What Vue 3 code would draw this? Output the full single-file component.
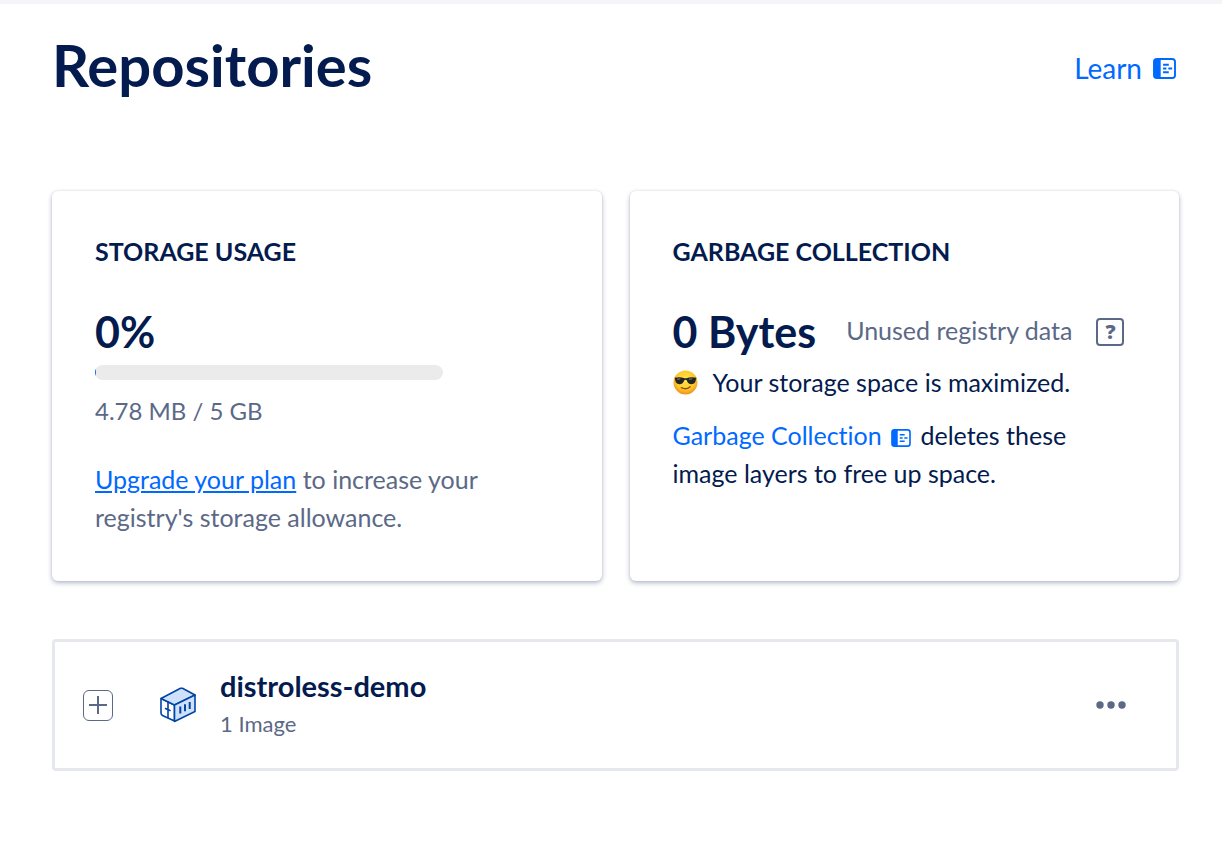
<template>
  <main class="page">
    <header class="page-header">
      <h1 class="page-title">Repositories</h1>
      <a href="#learn" class="doc-link learn-link">
        Learn
        <svg class="doc-icon" viewBox="0 0 24 22" aria-hidden="true">
          <rect x="1" y="1" width="22" height="20" rx="3" fill="none" stroke="currentColor" stroke-width="2" />
          <path d="M3 1h5v20H3a2 2 0 0 1-2-2V3a2 2 0 0 1 2-2z" fill="currentColor" />
          <path d="M10.500 7h6M10.500 11h3.500M16 11h4M10.500 15h6" fill="none" stroke="currentColor" stroke-width="2" />
        </svg>
      </a>
    </header>

    <section class="cards">
      <!-- Storage usage -->
      <article class="card">
        <h2 class="card-title">Storage usage</h2>
        <div class="figure-row">
          <span class="figure">{{ usedPercent }}%</span>
        </div>
        <div
          class="usage-bar"
          role="progressbar"
          aria-label="Storage usage"
          :aria-valuenow="usedPercent"
          aria-valuemin="0"
          aria-valuemax="100"
        >
          <div class="usage-fill" :style="{ width: fillWidth }"></div>
        </div>
        <p class="usage-text">{{ usedMb }} MB / {{ totalGb }} GB</p>
        <p class="upgrade-text">
          <a href="#upgrade" class="upgrade-link">Upgrade your plan</a> to increase your registry's storage allowance.
        </p>
      </article>

      <!-- Garbage collection -->
      <article class="card">
        <h2 class="card-title">Garbage collection</h2>
        <div class="figure-row">
          <span class="figure">0 Bytes</span>
          <span class="figure-label">Unused registry data</span>
          <button type="button" class="help-btn" aria-label="Help">?</button>
        </div>
        <p class="status">
          <svg class="emoji" viewBox="0 0 24 24" aria-hidden="true">
            <defs>
              <radialGradient id="face" cx="50%" cy="40%" r="60%">
                <stop offset="0" stop-color="#ffe74c" />
                <stop offset="0.65" stop-color="#ffc92e" />
                <stop offset="1" stop-color="#ee8f17" />
              </radialGradient>
            </defs>
            <circle cx="12" cy="12" r="11.500" fill="url(#face)" />
            <path d="M1.500 7.500Q7 6.300 11 8h2Q17 6.300 22.500 7.500L22 9.200Q21.500 13.500 18 13.700Q14.300 13.800 13.200 9.800Q12 9 10.800 9.800Q9.700 13.800 6 13.700Q2.500 13.500 2 9.200z" fill="#242424" />
            <path d="M4 9l3-.5M15.500 9l3-.5" stroke="#777" stroke-width="1" />
            <path d="M8 17Q12.500 19.300 16.500 16" fill="none" stroke="#8b4d12" stroke-width="1.300" stroke-linecap="round" />
          </svg>
          <span>Your storage space is maximized.</span>
        </p>
        <p class="gc-text">
          <a href="#garbage-collection" class="doc-link">Garbage Collection
            <svg class="doc-icon small" viewBox="0 0 24 22" aria-hidden="true">
              <rect x="1" y="1" width="22" height="20" rx="3" fill="none" stroke="currentColor" stroke-width="2" />
              <path d="M3 1h5v20H3a2 2 0 0 1-2-2V3a2 2 0 0 1 2-2z" fill="currentColor" />
              <path d="M10.500 7h6M10.500 11h3.500M16 11h4M10.500 15h6" fill="none" stroke="currentColor" stroke-width="2" />
            </svg></a>
          deletes these image layers to free up space.
        </p>
      </article>
    </section>

    <!-- Repository list -->
    <ul class="repo-list">
      <li v-for="repo in repositories" :key="repo.name" class="repo">
        <button type="button" class="expand-btn" aria-label="Expand">
          <svg viewBox="0 0 28 28" aria-hidden="true">
            <path d="M14 5v18M5 14h18" fill="none" stroke="currentColor" stroke-width="2" />
          </svg>
        </button>
        <svg class="repo-icon" viewBox="0 0 36 36" aria-hidden="true">
          <g stroke="#0045a5" stroke-width="1.600" stroke-linejoin="round" stroke-linecap="round">
            <path d="M1 11.500L14.500 18v16L2.500 28.500Q1 27.500 1 26z" fill="#fff" />
            <path d="M1 11.500L20.500 1.300h2L35 8 14.500 18z" fill="#cfe0fa" />
            <path d="M14.500 18L35 8v16.500L14.500 34.500z" fill="#cfe0fa" />
            <path d="M8 14.800v16M5.500 21.500l4.500 2" fill="none" />
            <path d="M20.300 19.500v7M25 17.300v7M29.700 15v7" fill="none" stroke-width="2" stroke-linecap="butt" />
          </g>
        </svg>
        <div class="repo-info">
          <h3 class="repo-name">{{ repo.name }}</h3>
          <p class="repo-images">{{ repo.images }} Image</p>
        </div>
        <button type="button" class="more-btn" aria-label="More">
          <svg viewBox="0 0 30 8" aria-hidden="true">
            <circle cx="4" cy="4" r="3.700" />
            <circle cx="15" cy="4" r="3.700" />
            <circle cx="26" cy="4" r="3.700" />
          </svg>
        </button>
      </li>
    </ul>
  </main>
</template>

<script setup>
import { ref, computed } from 'vue';

const usedMb = ref(4.78);
const totalGb = ref(5);

const repositories = ref([
  { name: 'distroless-demo', images: 1 }
]);

const usedRatio = computed(() => usedMb.value / (totalGb.value * 1024));
const usedPercent = computed(() => Math.round(usedRatio.value * 100));
const fillWidth = computed(() => `${usedRatio.value * 100}%`);
</script>

<style>
body {
  background: #fff;
}
</style>

<style scoped>
.page {
  border-top: 4px solid #f3f5f9;
  padding: 29px 43px 40px 52px;
  font-family: Lato, "Liberation Sans", sans-serif;
  font-size: 25px;
  font-variant-ligatures: none;
  line-height: 38px;
  color: #031b4e;
}

h1,
h2,
h3,
p,
ul {
  margin: 0;
  padding: 0;
}

a {
  color: #0069ff;
  text-decoration: none;
}

button {
  padding: 0;
  background: none;
  border: none;
  color: #5b6987;
  font-family: inherit;
  cursor: pointer;
}

.page-header {
  display: flex;
  justify-content: space-between;
  align-items: flex-start;
  margin-bottom: 87px;
  padding-right: 3px;
}

.page-title {
  font-size: 58px;
  line-height: 64px;
  font-weight: 700;
}

.learn-link {
  display: flex;
  align-items: center;
  gap: 11px;
  font-size: 28px;
  line-height: 71px;
}

.doc-icon {
  width: 23px;
  height: 21px;
}

.doc-icon.small {
  width: 20px;
  height: 18px;
  margin: 0 3px;
  vertical-align: -2px;
}

.cards {
  display: grid;
  grid-template-columns: 1fr 1fr;
  gap: 28px;
}

.card {
  padding: 41px 43px 45px;
  border-radius: 6px;
  background: #fff;
  box-shadow: 0 2px 5px rgba(3, 27, 78, 0.3), 0 0 2px rgba(3, 27, 78, 0.1);
}

.card-title {
  font-size: 25px;
  font-weight: 700;
  text-transform: uppercase;
}

.figure-row {
  display: flex;
  align-items: center;
  margin-top: 37px;
  line-height: 50px;
}

.figure {
  font-size: 43px;
  font-weight: 700;
}

.figure-label {
  margin-left: 30px;
  color: #5b6987;
  line-height: 46px;
  padding-bottom: 4px;
}

.help-btn {
  width: 28px;
  height: 28px;
  margin-left: 24px;
  border: 2px solid #5b6987;
  border-radius: 4px;
  font-family: "Open Sans", sans-serif;
  font-size: 20px;
  font-weight: 800;
  line-height: 24px;
}

.usage-bar {
  width: 75%;
  height: 15px;
  margin-top: 8px;
  border-radius: 8px;
  background: #ebebeb;
  overflow: hidden;
}

.usage-fill {
  min-width: 1px;
  height: 100%;
  background: #0069ff;
}

.usage-text {
  margin-top: 12px;
  font-size: 24px;
  color: #5b6987;
}

.upgrade-text {
  margin-top: 30px;
  color: #5b6987;
}

.upgrade-link {
  text-decoration: underline;
}

.status {
  display: flex;
  align-items: center;
  gap: 15px;
  margin-top: 6px;
}

.emoji {
  width: 25px;
  height: 25px;
}

.gc-text {
  margin-top: 15px;
  padding-right: 40px;
}

.repo-list {
  margin-top: 58px;
  list-style: none;
}

.repo {
  display: flex;
  align-items: center;
  padding: 25px 50px 25px 28px;
  border: 3px solid #e5e8ed;
  border-radius: 4px;
}

.expand-btn {
  width: 30px;
  height: 31px;
  border: 1px solid #5b6987;
  border-radius: 6px;
}

.expand-btn svg {
  display: block;
  width: 100%;
}

.repo-icon {
  width: 36px;
  height: 36px;
  margin: 0 24px 0 47px;
}

.repo-info {
  flex: 1;
}

.repo-name {
  font-size: 29px;
  font-weight: 700;
}

.repo-images {
  font-size: 22px;
  color: #5b6987;
}

.more-btn svg {
  display: block;
  width: 30px;
  height: 8px;
  fill: currentColor;
}
</style>
